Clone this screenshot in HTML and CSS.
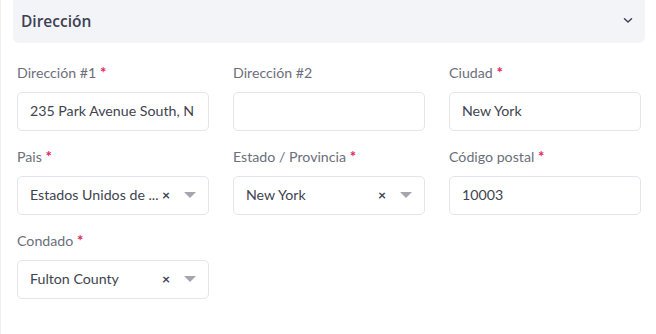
FILE: index.html
```html
<!DOCTYPE html>
<html lang="es">
<head>
<meta charset="utf-8">
<link rel="stylesheet" href="styles.css">
</head>
<body>
<div class="page">
  <div class="section-head">
    <span class="section-title">Dirección</span>
    <svg class="chevron" width="10" height="7" viewBox="0 0 10 7"><path d="M1.5 1.8 L5 5 L8.5 1.8" fill="none" stroke="#3d4152" stroke-width="1.5" stroke-linecap="round" stroke-linejoin="round"/></svg>
  </div>
  <div class="form-grid">
    <div class="field">
      <label class="label">Dirección #1 <span class="req">*</span></label>
      <div class="input">235 Park Avenue South, N</div>
    </div>
    <div class="field">
      <label class="label">Dirección #2</label>
      <div class="input"></div>
    </div>
    <div class="field">
      <label class="label">Ciudad <span class="req">*</span></label>
      <div class="input">New York</div>
    </div>
    <div class="field">
      <label class="label">Pais <span class="req">*</span></label>
      <div class="input select"><span class="sel-text">Estados Unidos de ...</span><span class="clear">×</span><span class="caret"></span></div>
    </div>
    <div class="field">
      <label class="label">Estado / Provincia <span class="req">*</span></label>
      <div class="input select"><span class="sel-text">New York</span><span class="clear">×</span><span class="caret"></span></div>
    </div>
    <div class="field">
      <label class="label">Código postal <span class="req">*</span></label>
      <div class="input">10003</div>
    </div>
    <div class="field">
      <label class="label">Condado <span class="req">*</span></label>
      <div class="input select"><span class="sel-text">Fulton County</span><span class="clear">×</span><span class="caret"></span></div>
    </div>
  </div>
</div>
</body>
</html>
```
FILE: styles.css
```css
html, body {
  margin: 0;
  padding: 0;
  background: #ffffff;
}
body {
  font-family: "Lato", "Open Sans", sans-serif;
  color: #3d4152;
  width: 656px;
  height: 334px;
  overflow: hidden;
}
.page {
  height: 334px;
  border-left: 1px solid #eff0f4;
  box-sizing: border-box;
  padding: 0 11px 0 12px;
}
.section-head {
  height: 43px;
  background: #f3f4f8;
  border-radius: 0 0 6px 6px;
  display: flex;
  align-items: center;
  justify-content: space-between;
  padding: 0 12px 0 8px;
}
.section-title {
  font-family: "Open Sans", "Lato", sans-serif;
  font-size: 15.5px;
  font-weight: 600;
  color: #3d4152;
  position: relative;
  top: -1px;
}
.chevron {
  position: relative;
  top: -1px;
}
.form-grid {
  display: grid;
  grid-template-columns: 192px 192px 192px;
  column-gap: 24px;
  row-gap: 16px;
  padding: 20px 0 0 4px;
}
.field {
  display: flex;
  flex-direction: column;
}
.label {
  font-size: 14.2px;
  line-height: 20px;
  height: 20px;
  color: #6b6f7b;
  margin-bottom: 9px;
}
.req {
  color: #e0245e;
  font-weight: 700;
  font-size: 15px;
  line-height: 1;
}
.input {
  height: 39px;
  box-sizing: border-box;
  border: 1px solid #e3e5ed;
  border-radius: 5px;
  font-size: 14.2px;
  line-height: 36px;
  color: #40444f;
  padding: 0 12px;
  white-space: nowrap;
  overflow: hidden;
}
.select {
  display: flex;
  align-items: center;
  padding-right: 12px;
  padding-bottom: 2px;
  line-height: 20px;
}
.sel-text {
  flex: 1;
  overflow: hidden;
}
.clear {
  font-size: 14px;
  font-weight: 700;
  color: #3d4152;
  margin-right: 14px;
  line-height: 1;
}
.caret {
  width: 0;
  height: 0;
  border-left: 6px solid transparent;
  border-right: 6px solid transparent;
  border-top: 6px solid #a3a6ae;
  margin-top: 1px;
}
```
